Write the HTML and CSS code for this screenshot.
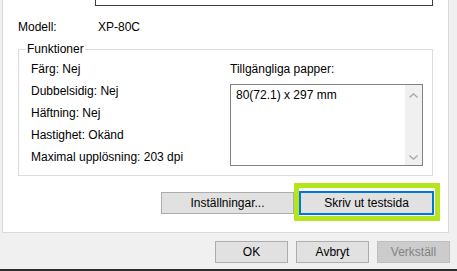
FILE: index.html
```html
<!DOCTYPE html>
<html>
<head>
    <meta charset="UTF-8">
    <meta name="viewport" content="width=device-width, initial-scale=1.0">
    <title>Skrivaregenskaper</title>
    <link rel="stylesheet" href="styles.css">
</head>
<body>
    <div class="window">
        <div class="panel">
            <div class="name-box"></div>

            <div class="model-row">
                <span class="model-label">Modell:</span>
                <span>XP-80C</span>
            </div>

            <!-- Funktioner group -->
            <div class="group">
                <span class="group-title">Funktioner</span>
                <div class="group-body">
                    <ul class="feature-list">
                        <li>Färg: Nej</li>
                        <li>Dubbelsidig: Nej</li>
                        <li>Häftning: Nej</li>
                        <li>Hastighet: Okänd</li>
                        <li>Maximal upplösning: 203 dpi</li>
                    </ul>
                    <div class="paper">
                        <div class="paper-label">Tillgängliga papper:</div>
                        <div class="listbox">
                            <div class="listbox-items">
                                <div>80(72.1) x 297 mm</div>
                            </div>
                            <div class="scrollbar">
                                <svg width="9" height="5" viewBox="0 0 9 5"><path d="M0.5 4.5 L4.5 0.8 L8.5 4.5" fill="none" stroke="#a6a6a6" stroke-width="1.3"/></svg>
                                <svg width="9" height="5" viewBox="0 0 9 5"><path d="M0.5 0.5 L4.5 4.2 L8.5 0.5" fill="none" stroke="#a6a6a6" stroke-width="1.3"/></svg>
                            </div>
                        </div>
                    </div>
                </div>
            </div>

            <div class="panel-actions">
                <button class="btn btn-settings">Inställningar...</button>
                <div class="highlight">
                    <button class="btn btn-focus">Skriv ut testsida</button>
                </div>
            </div>
        </div>

        <div class="dialog-actions">
            <button class="btn btn-dialog">OK</button>
            <button class="btn btn-dialog">Avbryt</button>
            <button class="btn btn-dialog" disabled>Verkställ</button>
        </div>
    </div>
</body>
</html>
```

FILE: styles.css
```css
* { box-sizing: border-box; margin: 0; padding: 0; }
body {
    font-family: "Liberation Sans", Arial, sans-serif;
    font-size: 12px;
    line-height: 15px;
    color: #000;
    background-color: #f0f0f0;
    overflow: hidden;
}
.window {
    width: 457px;
    height: 271px;
    padding-bottom: 6px;
    border-bottom: 2px solid #2d2d2d;
}

/* Tab page */
.panel {
    margin-left: 2px;
    width: 447px;
    height: 233px;
    padding-bottom: 11px;
    background-color: #fff;
    border: 1px solid #d9d9d9;
    border-top: none;
}
.name-box {
    margin-left: 92px;
    width: 338px;
    height: 6px;
    border: 1px solid #3c3c3c;
    border-top: none;
}
.model-row {
    display: flex;
    margin-top: 14px;
    padding-left: 15px;
}
.model-label { width: 80px; }

/* Group box */
.group {
    position: relative;
    margin: 14px 0 0 15px;
    width: 415px;
    height: 127px;
    padding: 12px 0 0 12px;
    border: 1px solid #dcdcdc;
}
.group-title {
    position: absolute;
    top: -8px;
    left: 7px;
    padding: 0 1px;
    background-color: #fff;
}
.group-body { display: flex; }
.feature-list {
    list-style: none;
    width: 199px;
    display: flex;
    flex-direction: column;
    gap: 7px;
}
.paper {
    display: flex;
    flex-direction: column;
    gap: 7px;
}
.listbox {
    display: flex;
    width: 193px;
    height: 82px;
    border: 1px solid #828282;
}
.listbox-items {
    flex: 1;
    padding: 3px 5px;
}
.scrollbar {
    width: 17px;
    display: flex;
    flex-direction: column;
    justify-content: space-between;
    align-items: center;
    padding: 8px 0 5px;
    background-color: #f0f0f0;
}
.scrollbar svg { display: block; }

/* Buttons */
.btn {
    display: block;
    height: 22px;
    font-family: inherit;
    font-size: 12px;
    color: #000;
    background-color: #e1e1e1;
    border: 1px solid #adadad;
}
.btn:disabled {
    color: #838383;
    background-color: #cccccc;
    border-color: #bfbfbf;
}
.panel-actions {
    display: flex;
    justify-content: flex-end;
    align-items: flex-start;
    margin-top: 7px;
    padding-right: 8px;
}
.btn-settings {
    width: 133px;
    margin-top: 9px;
}
.highlight {
    width: 146px;
    height: 38px;
    padding: 3px 1px 1px 0;
    border: 5px solid #b5e61d;
}
.btn-focus {
    width: 135px;
    height: 24px;
    border: 2px solid #0078d7;
}
.dialog-actions {
    display: flex;
    justify-content: flex-end;
    gap: 8px;
    margin-top: 8px;
    padding-right: 7px;
}
.btn-dialog { width: 73px; }
```
